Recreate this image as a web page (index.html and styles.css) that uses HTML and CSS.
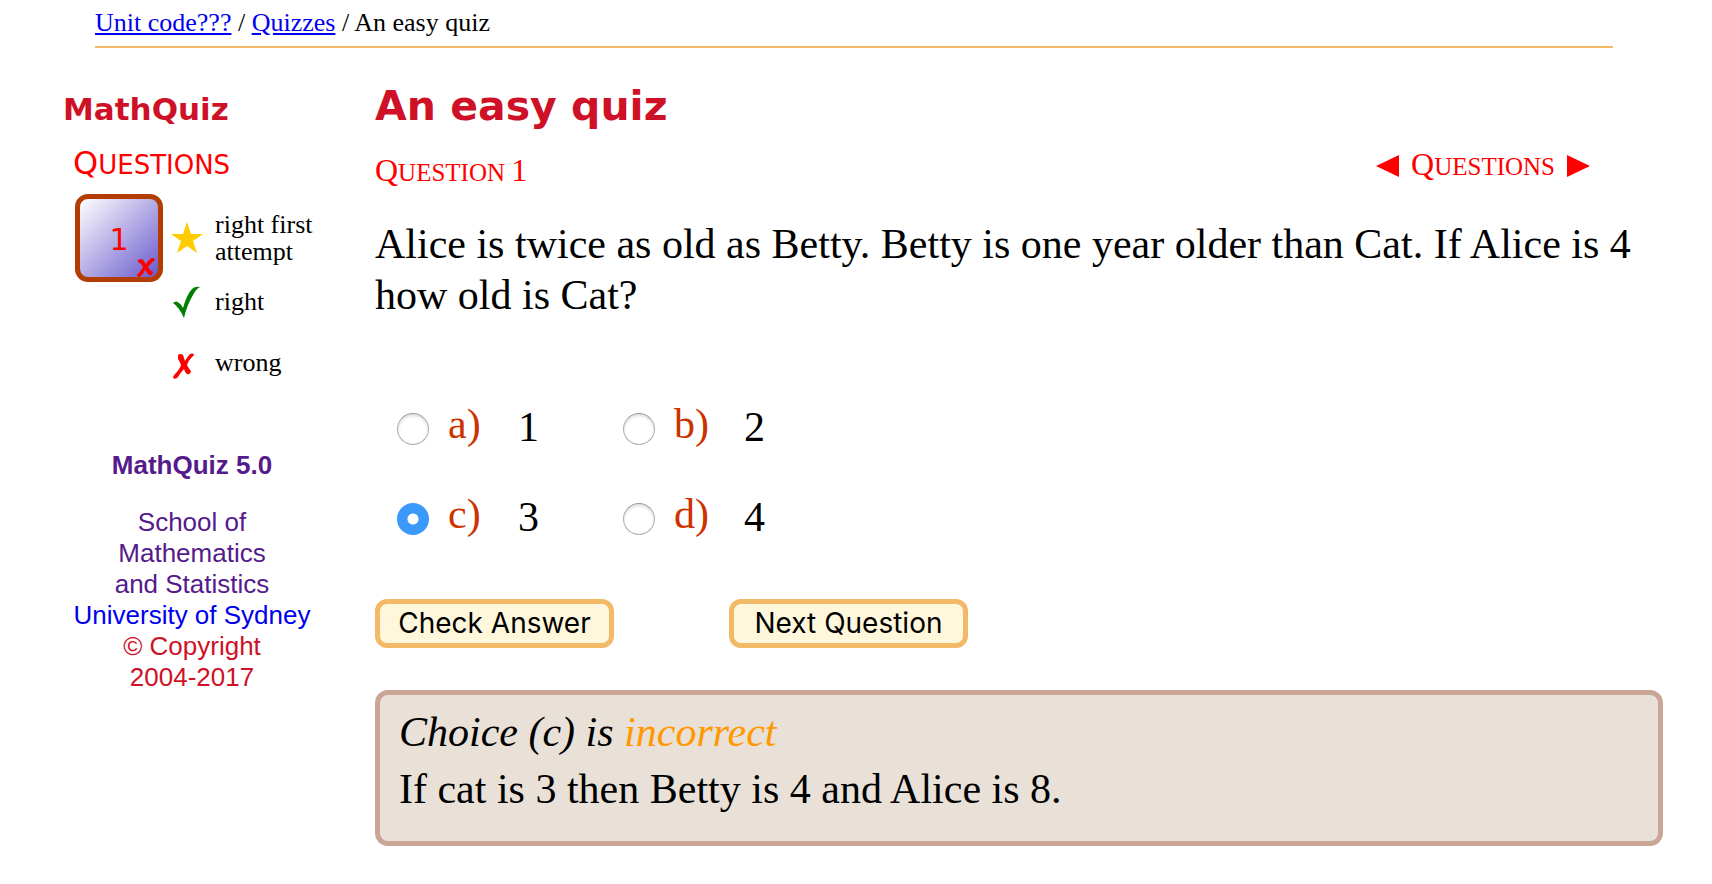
FILE: index.html
```html
<!DOCTYPE html>
<html lang="en">
<head>
<meta charset="utf-8">
<title>An easy quiz</title>
<link rel="stylesheet" href="styles.css">
</head>
<body>
<nav class="breadcrumb"><a href="#unit">Unit code???</a> / <a href="#quizzes">Quizzes</a> / An easy quiz</nav>
<div class="page">
  <aside class="sidebar">
    <div class="brand">MathQuiz</div>
    <h2 class="side-title">Questions</h2>
    <div class="progress">
      <button class="question-button" type="button">1
        <svg class="badge" viewBox="0 0 18 19" aria-hidden="true"><path d="M1 2Q4 0 6 2L9 6Q12 1 15 0Q18 0 18 2Q14 5 11 9Q13 13 16 14Q15 18 12 17Q10 15 8 12Q6 17 3 19Q0 19 0 17Q4 13 6 9Q4 5 1 4Z"/></svg>
      </button>
      <ul class="legend">
        <li class="legend-first"><svg class="icon star" viewBox="0 0 34 34" aria-hidden="true"><path d="M17 1L21 13H33L23 20L27 32L17 25L7 32L11 20L1 13H13Z"/></svg><span>right first<br>attempt</span></li>
        <li><svg class="icon check" viewBox="0 0 34 34" aria-hidden="true"><path d="M3 18Q6 15 9 18Q12 20 13 23Q17 9 22 4Q25 1 30 2Q26 4 23 10Q17 20 14 33Q9 22 3 18Z"/></svg><span>right</span></li>
        <li><svg class="icon cross" viewBox="0 0 34 34" aria-hidden="true"><path d="M8 9Q11 7 13 9Q14 12 15 15Q18 10 20 8Q22 7 24 8Q24 10 22 11Q18 15 17 19Q19 23 21 25Q20 29 17 28Q15 27 14 23Q11 26 8 31Q6 34 3 32Q3 30 5 28Q10 23 11 19Q9 14 8 13Z"/></svg><span>wrong</span></li>
      </ul>
    </div>
    <footer class="credits">
      <p><a class="visited" href="#mathquiz"><strong>MathQuiz 5.0</strong></a></p>
      <p><a class="visited" href="#school">School of<br>Mathematics<br>and Statistics</a><br><a href="#sydney">University of Sydney</a><br>© Copyright<br>2004-2017</p>
    </footer>
  </aside>
  <main class="quiz">
    <h1>An easy quiz</h1>
    <div class="question-head">
      <h2 class="question-title">Question <span class="number">1</span></h2>
      <nav class="pager">
        <a href="#previous" aria-label="Previous question"><svg class="arrow" viewBox="0 0 23 22"><path d="M0 11L23 0V22Z"/></svg></a>
        <span class="pager-title">Questions</span>
        <a href="#next" aria-label="Next question"><svg class="arrow" viewBox="0 0 23 22"><path d="M23 11L0 0V22Z"/></svg></a>
      </nav>
    </div>
    <p class="question">Alice is twice as old as Betty. Betty is one year older than Cat. If Alice is 4 how old is Cat?</p>
    <form>
      <div class="options">
        <label class="option"><input type="radio" name="answer"><span class="letter">a)</span><span>1</span></label>
        <label class="option"><input type="radio" name="answer"><span class="letter">b)</span><span>2</span></label>
        <label class="option"><input type="radio" name="answer" checked><span class="letter">c)</span><span>3</span></label>
        <label class="option"><input type="radio" name="answer"><span class="letter">d)</span><span>4</span></label>
      </div>
      <div class="actions">
        <button class="action" type="button">Check Answer</button>
        <button class="action" type="button">Next Question</button>
      </div>
    </form>
    <section class="feedback">
      <p><em>Choice (c) is <span class="verdict">incorrect</span></em></p>
      <p>If cat is 3 then Betty is 4 and Alice is 8.</p>
    </section>
  </main>
</div>
</body>
</html>
```
FILE: styles.css
```css
* { box-sizing: border-box; }
body { margin: 0; background: #fff; color: #000; font: 26px/30px "Liberation Serif", "Times New Roman", serif; }
h1, h2, p, ul { margin: 0; padding: 0; font-weight: normal; }
a { color: #0000ee; }

.breadcrumb { margin: 0 99px 0 95px; padding: 8px 0; border-bottom: 2px solid #f2ba66; }
.page { display: flex; gap: 63px; padding: 33px 49px 39px 63px; }

.sidebar { flex: 0 0 249px; min-width: 0; padding-top: 8px; }
.brand { color: #ce1126; font: bold 31px/40px "DejaVu Sans", Verdana, sans-serif; }
.side-title { margin: 14px 0 9px 10px; color: #f00; font: 26px/40px "DejaVu Sans", Verdana, sans-serif; text-transform: uppercase; }
.side-title::first-letter { font-size: 32px; }

.progress { display: flex; gap: 7px; padding-left: 12px; }
.question-button { position: relative; flex: none; width: 88px; height: 88px; padding: 4px 0 0; border: 5px solid #b33c00; border-radius: 13px; background: linear-gradient(135deg, #fff, #6a5acd); color: #f00; font: 30px/40px "DejaVu Sans", Verdana, sans-serif; }
.badge { position: absolute; right: 3px; bottom: 0; width: 18px; height: 19px; fill: #f00; }
.legend { list-style: none; padding-top: 17px; font-size: 26px; line-height: 27px; white-space: nowrap; }
.legend li { display: flex; align-items: center; gap: 11px; height: 61px; }
.legend .legend-first { height: 54px; margin-bottom: 6px; }
.icon { flex: none; width: 34px; height: 34px; }
.star { fill: #fc0; }
.check { fill: #008000; }
.cross { fill: #f00; }

.credits { display: flex; flex-direction: column; gap: 26px; margin: 57px -9px 0 0; color: #ce1126; font: 26px/31px "Liberation Sans", Arial, sans-serif; text-align: center; }
.credits a { text-decoration: none; }
.credits .visited { color: #551a8b; }

.quiz { flex: 1; min-width: 0; }
h1 { color: #ce1126; font: bold 41px/50px "DejaVu Sans", Verdana, sans-serif; }
.question-head { display: flex; justify-content: space-between; align-items: flex-start; margin-top: 13px; padding-right: 73px; color: #f00; line-height: 40px; }
.question-title, .pager-title { font-size: 25px; text-transform: uppercase; }
.question-title { margin-top: 6px; }
.question-title::first-letter, .pager-title::first-letter, .number { font-size: 32px; }
.pager { display: flex; align-items: center; gap: 12px; }
.pager a { display: flex; }
.arrow { width: 23px; height: 22px; fill: #f00; }
.question { margin-top: 26px; font-size: 42px; line-height: 51px; }

.options { display: grid; grid-template-columns: 226px 226px; row-gap: 40px; margin-top: 81px; padding-left: 22px; font-size: 42px; line-height: 50px; }
.option { display: grid; grid-template-columns: 51px 70px auto; align-items: start; }
.option input { appearance: none; width: 32px; height: 32px; margin: 11px 0 0; border: 1px solid #b0b0b0; border-top-color: #999; border-radius: 50%; background: #fff; box-shadow: inset 0 2px 3px #ddd; }
.option input:checked { border: 0; background: radial-gradient(circle, #fff 5px, #3b99fc 6px); box-shadow: none; }
.letter { color: #c30; line-height: 44px; }

.actions { display: flex; gap: 115px; margin-top: 57px; }
.action { width: 239px; height: 49px; padding: 0; border: 5px solid #f2ba66; border-radius: 12px; background: #fff7dc; color: #000; font: 28px/39px Inter, sans-serif; white-space: nowrap; }

.feedback { margin-top: 42px; padding: 9px 19px 23px; border: 5px solid #c9a595; border-radius: 13px; background: #e9e0d8; font-size: 42px; line-height: 57px; }
.verdict { color: #ff9900; }
```
